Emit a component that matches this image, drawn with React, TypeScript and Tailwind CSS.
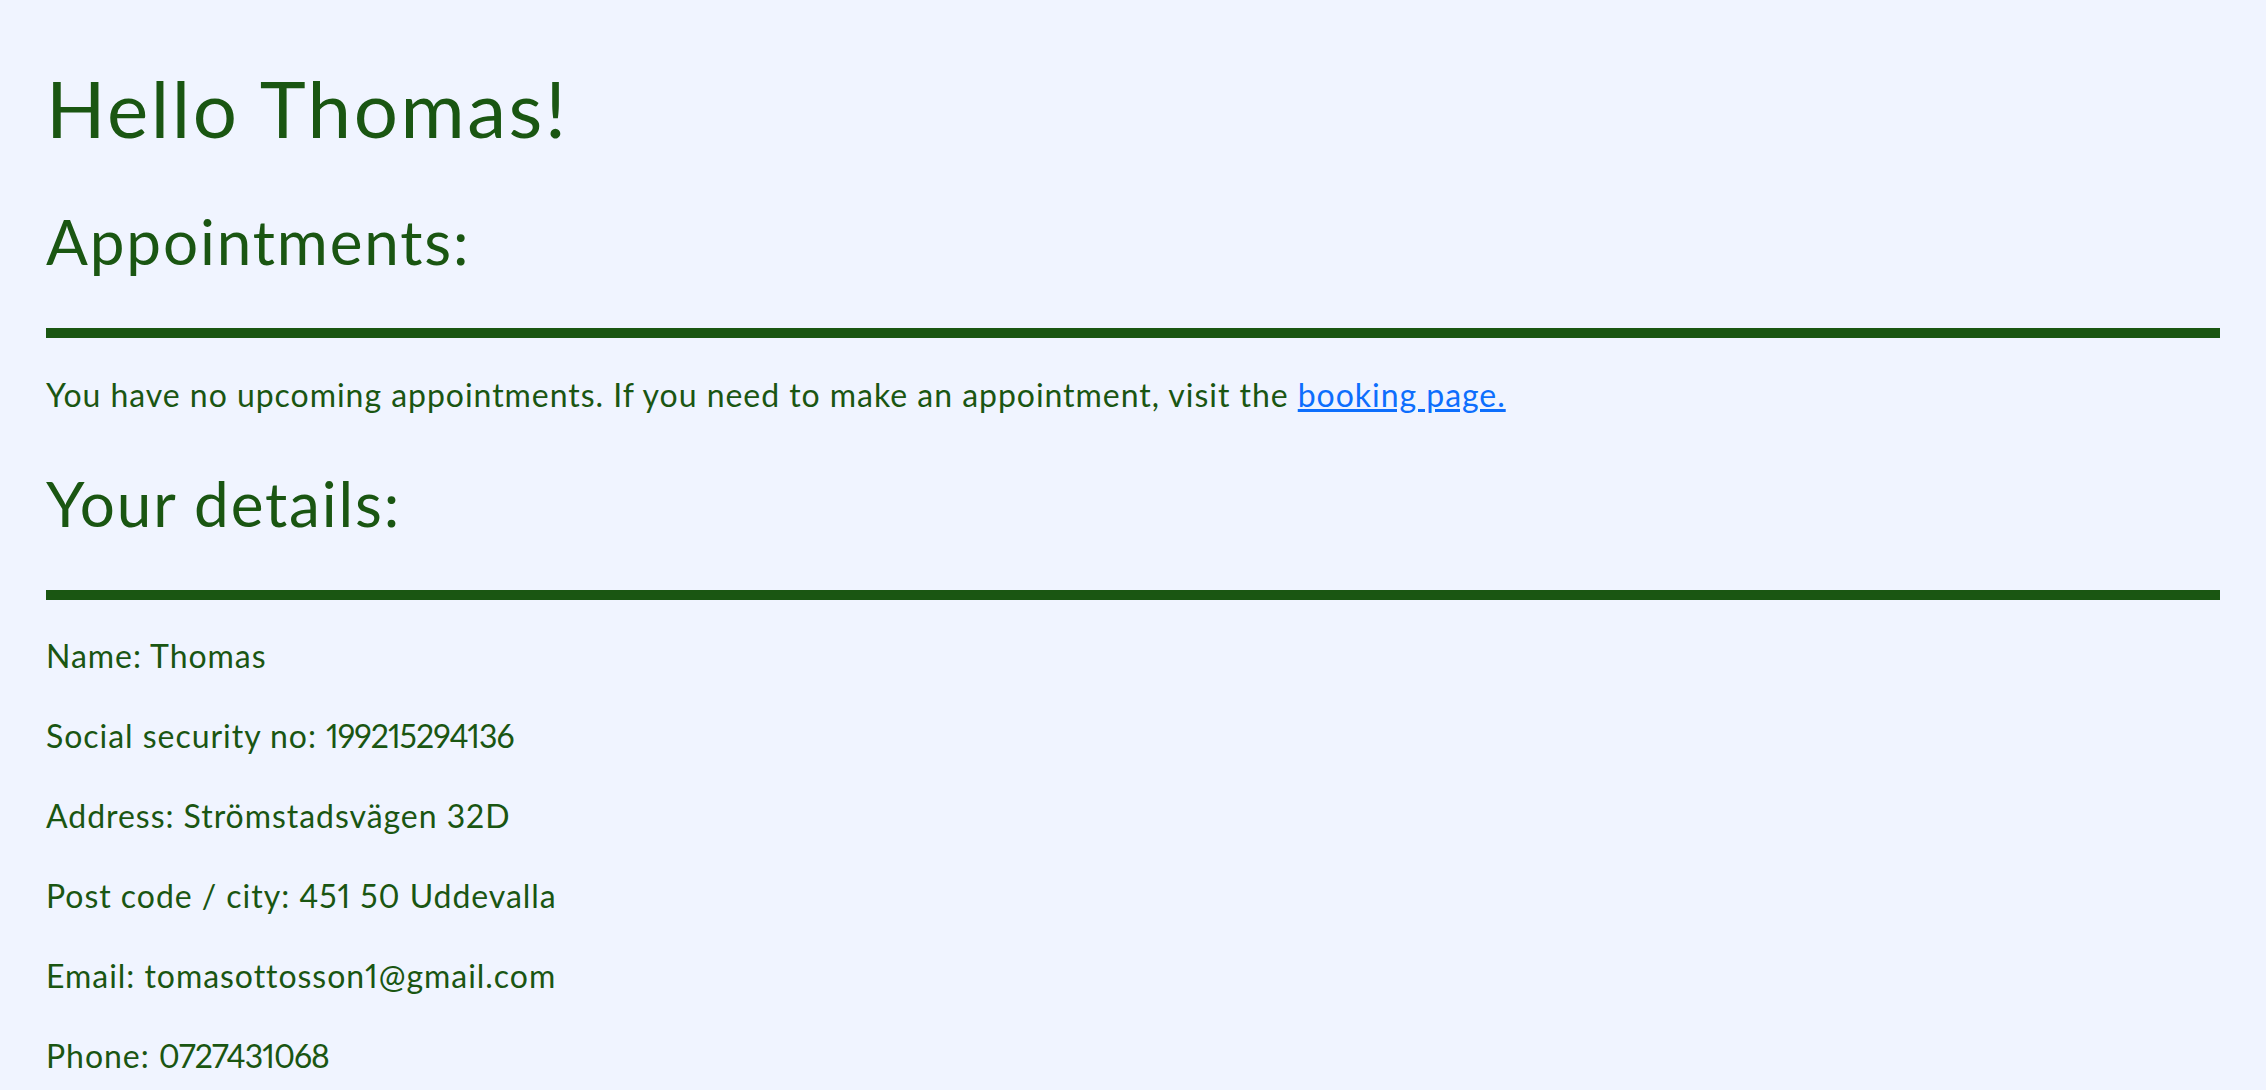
export default function App() {
  const details = [
    { label: "Name", value: "Thomas" },
    { label: "Social security no", value: "199215294136", digits: true },
    { label: "Address", value: "Strömstadsvägen 32D" },
    { label: "Post code / city", value: "451 50 Uddevalla" },
    { label: "Email", value: "tomasottosson1@gmail.com" },
    { label: "Phone", value: "0727431068", digits: true },
  ];

  return (
    <div className="min-h-screen bg-[#f0f4ff] text-[#1a5612] font-['Lato','Noto_Sans',sans-serif] proportional-nums">
      <main className="px-[46px] pt-[61px]">
        {/* Greeting */}
        <h1 className="text-[78px] leading-[94px] font-normal tracking-[0.033em]">Hello Thomas!</h1>

        {/* Appointments */}
        <h2 className="mt-[49px] text-[62px] leading-[74px] font-normal tracking-[0.03em]">Appointments:</h2>
        <hr className="mt-[50px] h-[10px] border-0 bg-[#1a5612]" />
        <p className="mt-[33px] text-[32px] leading-[48px] tracking-[0.03em]">
          You have no upcoming appointments. If you need to make an appointment, visit the{" "}
          <a href="#" className="text-[#0d6efd] underline">
            booking page.
          </a>
        </p>

        {/* Details */}
        <h2 className="mt-[47px] text-[62px] leading-[74px] font-normal tracking-[0.03em]">Your details:</h2>
        <hr className="mt-[50px] h-[10px] border-0 bg-[#1a5612]" />
        <div className="mt-[32px] flex flex-col gap-[32px]">
          {details.map((d) => (
            <p key={d.label} className="text-[32px] leading-[48px] tracking-[0.03em]">
              {d.label}: <span className={d.digits ? "tracking-[-0.03em]" : ""}>{d.value}</span>
            </p>
          ))}
        </div>
      </main>
    </div>
  );
}
